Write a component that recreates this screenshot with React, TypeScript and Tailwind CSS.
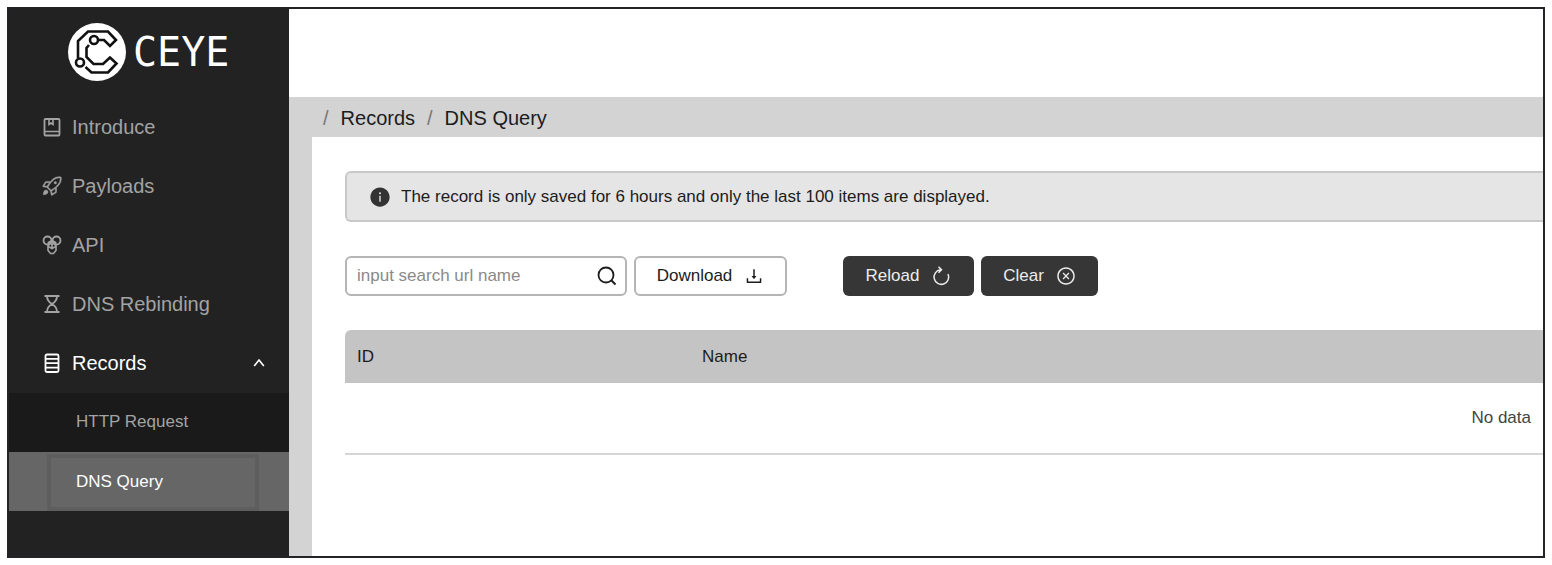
import type { ReactNode } from "react";
import { AiFillInfoCircle, AiOutlineCloseCircle, AiOutlineDownload } from "react-icons/ai";
import { GoRocket } from "react-icons/go";

function Logo() {
  return (
    <svg viewBox="0 0 60 60" className="size-[60px] shrink-0" aria-hidden="true">
      <circle cx="30" cy="30" r="29" fill="#fff" />
      <g fill="none" stroke="#111" strokeWidth="2.6">
        <path d="M11 36V19L21 9.500H41L49 18L43 24L37 18H31" />
        <circle cx="27" cy="18" r="4" />
        <circle cx="13" cy="40.500" r="4" />
        <path d="M22 23L19.500 26V35L26.500 42H36L43 35.500L49.500 41.500L41 50.500H24.500L18.500 45" />
      </g>
    </svg>
  );
}

function Icon({ children, className = "size-5" }: { children: ReactNode; className?: string }) {
  return (
    <svg viewBox="0 0 20 20" className={`${className} shrink-0`} fill="none" stroke="currentColor" strokeWidth="1.8" aria-hidden="true">
      {children}
    </svg>
  );
}

const BookIcon = () => (
  <Icon>
    <rect x="2.500" y="2" width="15" height="16.500" rx="1" />
    <path d="M2.500 14.500H17.500M7 2V7.500L9 6L11 7.500V2" strokeWidth="1.600" />
  </Icon>
);

const ApiIcon = () => (
  <Icon>
    <circle cx="5.500" cy="5.500" r="4" />
    <circle cx="14.500" cy="5.500" r="4" />
    <path d="M10 5.500L13.500 7.500V11.500L10 13.500L6.500 11.500V7.500Z" />
    <path d="M6 10.500V15.500L8.500 18.500H11.500L14 15.500V10.500M7 7.500L10 9.500L13 7.500M10 9.500V13" strokeWidth="1.600" />
  </Icon>
);

const HourglassIcon = () => (
  <Icon>
    <path d="M2.500 2H17.500M2.500 18H17.500M5 2C5 6 6.500 8 10 10C13.500 8 15 6 15 2M5 18C5 14 6.500 12 10 10C13.500 12 15 14 15 18" />
  </Icon>
);

const ServerIcon = () => (
  <Icon>
    <rect x="3.500" y="1.500" width="13" height="17.500" rx="1.500" />
    <path d="M3.500 5.800H16.500M3.500 10.200H16.500M3.500 14.600H16.500" />
  </Icon>
);

const ChevronIcon = () => (
  <Icon className="ml-auto size-3">
    <path d="M2 15L10 5L18 15" strokeWidth="2.800" />
  </Icon>
);

const SearchIcon = () => (
  <Icon>
    <circle cx="9" cy="9" r="7.500" />
    <path d="M14.500 14.500L18.500 18.500" strokeWidth="2" />
  </Icon>
);

const ReloadIcon = () => (
  <Icon>
    <path d="M9.500 3.800A7.300 7.300 0 1 0 17 8M7.500 0.800L10.500 3.800L7.500 6.800" strokeWidth="1.500" />
  </Icon>
);

const menu = [
  { icon: <BookIcon />, text: "Introduce" },
  { icon: <GoRocket className="size-5 shrink-0 stroke-current stroke-[0.5]" />, text: "Payloads" },
  { icon: <ApiIcon />, text: "API" },
  { icon: <HourglassIcon />, text: "DNS Rebinding" },
];

function Sidebar() {
  return (
    <nav className="w-[280px] shrink-0 bg-[#222] text-[#a3a3a3]">
      <a href="#" className="flex h-[89px] items-center gap-1.5 pb-1 pl-[58px] text-white">
        <Logo />
        <span className="font-['DejaVu_Sans_Mono',monospace] text-[40px] leading-10">CEYE</span>
      </a>
      {menu.map((item) => (
        <a key={item.text} href="#" className="flex h-[59px] items-center gap-2.5 pb-0.5 pl-[33px] text-[20px]">
          {item.icon}
          {item.text}
        </a>
      ))}
      <button type="button" aria-expanded="true" className="flex h-[59px] w-full items-center gap-2.5 pr-6 pb-0.5 pl-[33px] text-[20px] text-white">
        <ServerIcon />
        Records
        <ChevronIcon />
      </button>
      <div className="bg-[#1a1a1a] text-[17px]">
        <a href="#" className="flex h-[59px] items-center pb-0.5 pl-[67px]">HTTP Request</a>
        <a href="#" aria-current="page" className="flex h-[59px] bg-[#666] pt-0.5 pr-[30px] pl-[38px] text-white">
          <span className="flex flex-1 items-center border-4 border-[#5e5e5e] pb-0.5 pl-[25px]">DNS Query</span>
        </a>
      </div>
    </nav>
  );
}

export default function App() {
  return (
    <div className="flex min-h-screen bg-white p-[7px] font-['Liberation_Sans',Arial,sans-serif] text-[#1c1c1c]">
      <div className="flex min-w-0 flex-1 border-2 border-[#242226]">
        <Sidebar />
        <div className="flex min-w-0 flex-1 flex-col bg-[#d3d3d3]">
          <header className="h-[88px] bg-white" />
          <nav aria-label="Breadcrumb" className="flex h-10 items-center gap-3 pt-0.5 pl-[34px] text-[20px]">
            <span className="text-[#777]">/</span>
            <a href="#">Records</a>
            <span className="text-[#777]">/</span>
            <span>DNS Query</span>
          </nav>
          <main className="ml-[23px] flex-1 bg-white pt-[34px] pl-[33px] text-[17px]">
            <div role="alert" className="flex h-[51px] items-center gap-2.5 rounded-l-md border-2 border-r-0 border-[#c8c8c8] bg-[#e5e5e5] pl-[22px]">
              <AiFillInfoCircle className="size-[22px] shrink-0 text-[#333]" />
              The record is only saved for 6 hours and only the last 100 items are displayed.
            </div>

            <div className="mt-[34px] flex h-10 gap-[7px]">
              <div className="flex w-[282px] items-center rounded-md border-2 border-[#b5b5b5] pr-2 pl-2.5">
                <input type="text" aria-label="Search url name" placeholder="input search url name" className="min-w-0 flex-1 outline-none placeholder:text-[#8a8a8a]" />
                <button type="button" aria-label="Search" className="flex"><SearchIcon /></button>
              </div>
              <button type="button" className="flex w-[153px] items-center justify-center gap-3 rounded-md border-2 border-[#b5b5b5]">
                Download
                <AiOutlineDownload className="size-5" />
              </button>
              <button type="button" className="ml-[49px] flex w-[131px] items-center justify-center gap-3 rounded-md bg-[#363636] text-[#ececec]">
                Reload
                <ReloadIcon />
              </button>
              <button type="button" className="flex w-[117px] items-center justify-center gap-3 rounded-md bg-[#363636] text-[#ececec]">
                Clear
                <AiOutlineCloseCircle className="size-5" />
              </button>
            </div>

            <table className="mt-[34px] w-full border-separate border-spacing-0 text-left">
              <thead>
                <tr className="h-[53px]">
                  <th className="w-[345px] rounded-tl-md bg-[#c4c4c4] pl-3 font-normal">ID</th>
                  <th className="bg-[#c4c4c4] pl-3 font-normal">Name</th>
                </tr>
              </thead>
              <tbody>
                <tr className="h-[72px]">
                  <td colSpan={2} className="border-b-2 border-[#d6d6d6] pr-3 text-right text-[#444]">No data</td>
                </tr>
              </tbody>
            </table>
          </main>
        </div>
      </div>
    </div>
  );
}
